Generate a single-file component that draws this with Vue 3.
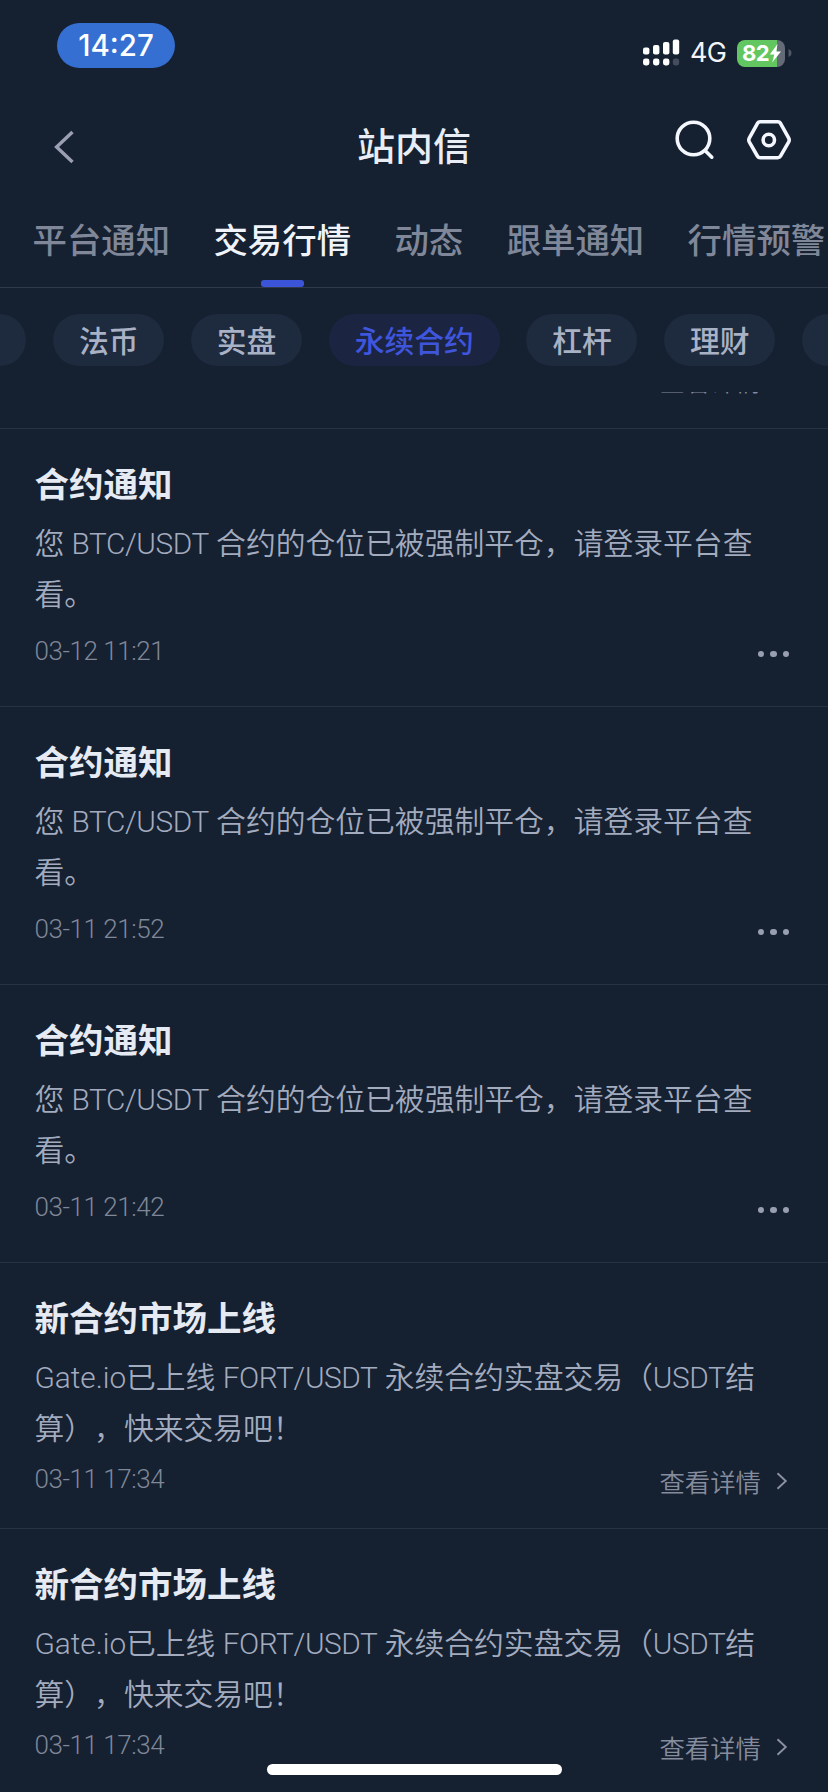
<script setup>
const tabs = ['平台通知', '交易行情', '动态', '跟单通知', '行情预警']
const chips = ['', '法币', '实盘', '永续合约', '杠杆', '理财', '打新']
const liquidation = [
  [{ t: '您 ' }, { t: 'BTC/USDT', latin: true }, { t: ' 合约的仓位已被强制平仓，请登录平台查' }],
  [{ t: '看。' }]
]
const listing = [
  [{ t: 'Gate.io', latin: true, loose: true }, { t: '已上线 ' }, { t: 'FORT/USDT', latin: true }, { t: ' 永续合约实盘交易（' }, { t: 'USDT', latin: true }, { t: '结' }],
  [{ t: '算），快来交易吧！' }]
]
const messages = [
  { title: '合约通知', lines: liquidation, time: '03-12 11:21' },
  { title: '合约通知', lines: liquidation, time: '03-11 21:52' },
  { title: '合约通知', lines: liquidation, time: '03-11 21:42' },
  { title: '新合约市场上线', lines: listing, time: '03-11 17:34', link: true },
  { title: '新合约市场上线', lines: listing, time: '03-11 17:34', link: true }
]
</script>

<template>
  <div class="screen">
    <div class="status">
      <span class="clock">14:27</span>
      <div class="indicators">
        <svg class="signal" width="38" height="28" viewBox="0 0 38 28" fill="#fff">
          <rect x="0" y="8.5" width="6.4" height="7" rx="2" />
          <rect x="10" y="6" width="6.4" height="9.5" rx="2" />
          <rect x="20" y="3" width="6.4" height="12.5" rx="2" />
          <rect x="29.8" y="0.5" width="6.4" height="15" rx="2" />
          <rect x="0" y="19.5" width="6.4" height="7" rx="2.4" />
          <rect x="10" y="19.5" width="6.4" height="7" rx="2.4" />
          <rect x="20" y="19.5" width="6.4" height="7" rx="2.4" />
          <rect x="29.8" y="19.5" width="6.4" height="7" rx="2.4" fill="#454d5c" />
        </svg>
        <span class="net">4G</span>
        <div class="battery">
          <span class="level">82</span>
          <svg width="13" height="19" viewBox="0 0 13 19"><path d="M8.5 0L0.8 10.6H5.3L3.2 18.6L12 7.6H7.3Z" fill="#fff" /></svg>
        </div>
        <svg class="nub" width="4" height="8" viewBox="0 0 4 8"><path d="M0.5 0Q3.5 1.2 3.5 4T0.5 8Z" fill="#505866" /></svg>
      </div>
    </div>

    <header class="nav">
      <svg class="back" width="22" height="36" viewBox="0 0 22 36" fill="none" stroke="#9b9fb3" stroke-width="3.4"><path d="M18.5 3L2.6 18L18.5 33" /></svg>
      <h1>站内信</h1>
      <div class="actions">
        <svg width="40" height="42" viewBox="0 0 40 42" fill="none" stroke="#f4f7fd" stroke-width="3.6" stroke-linecap="round">
          <circle cx="18.5" cy="19.5" r="16.3" />
          <path d="M30.5 32L36.8 38.2" />
        </svg>
        <svg class="gear" width="46" height="42" viewBox="0 0 46 42" fill="none" stroke="#f4f7fd" stroke-width="3.6" stroke-linejoin="round">
          <path d="M14.2 2.8H31.8Q33.6 2.8 34.5 4.3L42.6 18.8Q43.8 21 42.6 23.2L34.5 37.2Q33.6 38.7 31.8 38.7H14.2Q12.4 38.7 11.5 37.2L3.4 23.2Q2.2 21 3.4 18.8L11.5 4.3Q12.4 2.8 14.2 2.8Z" />
          <circle cx="22.8" cy="21" r="5.7" />
        </svg>
      </div>
    </header>

    <nav class="tabs">
      <span v-for="(tab, i) in tabs" :key="tab" class="tab" :class="{ active: i === 1 }">{{ tab }}</span>
    </nav>

    <div class="chips">
      <span v-for="(chip, i) in chips" :key="i" class="chip" :class="{ active: i === 3, blank: !chip }">{{ chip }}</span>
    </div>

    <main class="list">
      <div class="peek">
        <span class="more">查看详情<svg width="12" height="18"></svg></span>
      </div>
      <article v-for="(m, i) in messages" :key="i" class="item" :class="{ linked: m.link }">
        <h2>{{ m.title }}</h2>
        <p>
          <span v-for="(line, l) in m.lines" :key="l" class="line"><span v-for="(part, p) in line" :key="p" :class="{ latin: part.latin, loose: part.loose }">{{ part.t }}</span></span>
        </p>
        <footer>
          <time>{{ m.time }}</time>
          <a v-if="m.link" class="more">查看详情<svg width="12" height="18" viewBox="0 0 12 18" fill="none" stroke="#8b91a3" stroke-width="1.9"><path d="M1.5 1.2L9.8 9L1.5 16.8" /></svg></a>
          <span v-else class="dots"><i></i><i></i><i></i></span>
        </footer>
      </article>
    </main>
    <div class="home"></div>
  </div>
</template>

<style>
body { background: #152030; }
</style>

<style scoped>
.screen {
  position: relative;
  width: 828px;
  height: 1792px;
  overflow: hidden;
  display: flex;
  flex-direction: column;
  background: #152030;
  font-family: "Noto Sans CJK SC", sans-serif;
  white-space: nowrap;
  text-spacing-trim: space-all;
}
.status {
  height: 100px;
  flex: none;
  display: flex;
  justify-content: space-between;
  align-items: flex-start;
  box-sizing: border-box;
  padding: 23px 36px 0 57px;
}
.clock {
  width: 118px;
  height: 45px;
  border-radius: 23px;
  background: #356fd2;
  color: #fff;
  font: 500 29.5px/45px Inter, sans-serif;
  text-align: center;
}
.indicators { display: flex; align-items: center; height: 28px; margin-top: 16px; }
.net { font: 400 27px/28px Inter, sans-serif; color: #f2f4f8; width: 36px; margin-left: 9px; letter-spacing: -0.8px; }
.battery {
  display: flex;
  align-items: center;
  box-sizing: border-box;
  width: 48px;
  height: 27px;
  margin-left: 11px;
  padding-left: 5px;
  border-radius: 8px;
  background: linear-gradient(90deg, #62c760 0 40px, #646a76 40px);
}
.level { font: 700 22px/27px Inter, sans-serif; letter-spacing: -0.5px; color: #fff; width: 27px; }
.nub { margin-left: 3px; }
.nav {
  height: 92px;
  flex: none;
  display: grid;
  grid-template-columns: 1fr auto 1fr;
  align-items: center;
  box-sizing: border-box;
  padding: 0 36px;
}
.back { margin: 2px 0 0 18px; }
h1 { margin: -4px 0 0; font-size: 38px; line-height: 56px; font-weight: 500; color: #e9edf6; }
.actions { display: flex; justify-content: flex-end; gap: 31px; margin-top: -12px; }
.tabs {
  height: 96px;
  flex: none;
  box-sizing: border-box;
  display: flex;
  gap: 43.4px;
  padding-left: 32.5px;
  border-bottom: 1px solid #303a48;
}
.tab { position: relative; flex: none; font-size: 34.4px; line-height: 92px; font-weight: 500; color: #7f8798; }
.tab.active { color: #f0f3fa; }
.tab.active::after {
  content: "";
  position: absolute;
  left: 50%;
  bottom: 0;
  width: 43px;
  height: 7px;
  margin-left: -21px;
  border-radius: 3px;
  background: #3c55d8;
}
.chips { display: flex; flex: none; gap: 26.9px; height: 104px; box-sizing: border-box; padding-top: 26px; margin-left: -85px; }
.chip {
  flex: none;
  height: 52px;
  padding: 0 25.7px;
  border-radius: 26px;
  background: #1e2a3e;
  color: #a9b1c4;
  font-size: 29.8px;
  line-height: 50px;
  font-weight: 500;
}
.chip.active { background: #1b2441; color: #3f55dc; }
.chip.blank { width: 60px; }
.list { flex: 1; min-height: 0; overflow: hidden; }
.item {
  height: 278px;
  box-sizing: border-box;
  padding: 28px 38px 0 34.5px;
  border-bottom: 1px solid #273242;
}
.item.linked { height: 266px; }
.peek {
  display: flex;
  justify-content: flex-end;
  align-items: flex-start;
  box-sizing: border-box;
  height: 76px;
  margin-top: -39px;
  padding: 5px 40px 0;
  border-bottom: 1px solid #273242;
}
h2 { margin: 0; font-size: 34.5px; line-height: 50px; font-weight: 700; color: #e6eaf3; }
p { margin: 9px 0 0; font-size: 29.8px; line-height: 51px; color: #a3abbf; font-weight: 350; word-spacing: 0.6px; }
.line { display: block; height: 51px; }
.latin { font-family: Roboto, sans-serif; font-weight: 350; letter-spacing: -0.42px; line-height: 1; }
.loose { letter-spacing: -0.05px; }
footer { display: flex; justify-content: space-between; align-items: center; height: 50px; margin-top: 8px; }
.linked footer { margin-top: 2px; }
time { font-family: Roboto, sans-serif; font-weight: 350; font-size: 26px; letter-spacing: -0.45px; color: #7f8798; }
.more { display: flex; align-items: center; font-size: 25.4px; line-height: 38px; font-weight: 350; color: #858c9e; margin-top: 3px; }
footer .more { margin-right: 2px; }
.more svg { margin-left: 15px; }
.dots { display: flex; gap: 6px; margin: 6px 1px 0 0; }
.dots i { width: 6.5px; height: 6.5px; border-radius: 50%; background: #989fb0; }
.home { position: absolute; left: 267px; bottom: 17px; width: 295px; height: 11px; border-radius: 6px; background: #fff; }
</style>
